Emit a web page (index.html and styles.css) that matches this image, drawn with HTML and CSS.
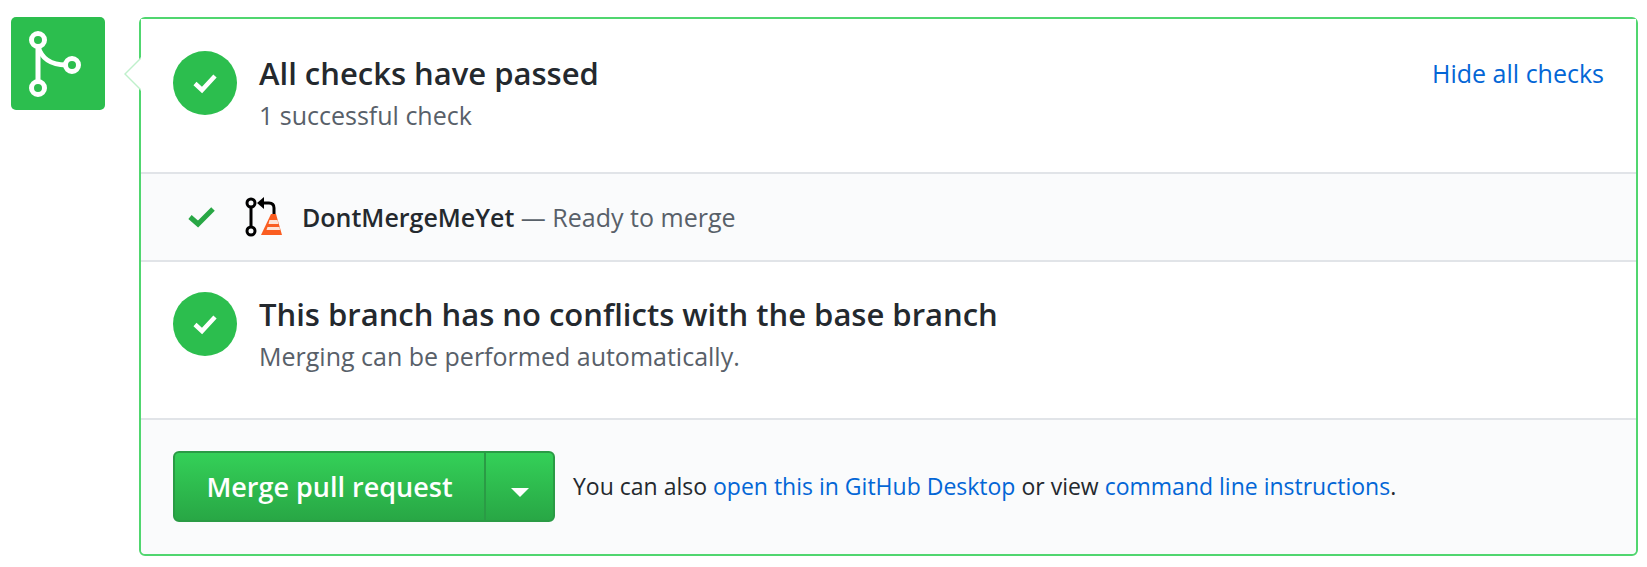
FILE: index.html
```html
<!DOCTYPE html>
<html lang="en">
<head>
    <meta charset="UTF-8">
    <title>Merge pull request</title>
    <link rel="stylesheet" href="styles.css">
</head>
<body>
    <div class="merge-box">
        <div class="merge-icon">
            <svg width="66" height="66" viewBox="0 0 66 66" fill="none" stroke="#fff" stroke-width="5">
                <circle cx="13" cy="9" r="6.5"/>
                <circle cx="13" cy="57" r="6.5"/>
                <circle cx="47" cy="34" r="6.5"/>
                <path d="M13 15V51"/>
                <path d="M13 15C16 27 26 34 41 34"/>
            </svg>
        </div>
        <div class="card">
            <div class="arrow"></div>

            <div class="section">
                <div class="status-circle">
                    <svg width="26" height="26" viewBox="0 0 26 26" fill="none" stroke="#fff" stroke-width="4.5"><path d="M3 13.5L10 20L23 6"/></svg>
                </div>
                <div class="section-text">
                    <h3>All checks have passed</h3>
                    <p>1 successful check</p>
                </div>
                <a class="link hide-link" href="#">Hide all checks</a>
            </div>

            <div class="check-row">
                <svg class="check-mark" width="28" height="22" viewBox="0 0 28 22" fill="none" stroke="#28a745" stroke-width="5"><path d="M2 11L10 18L25 3"/></svg>
                <svg class="app-icon" width="38" height="42" viewBox="0 0 38 42">
                    <g fill="none" stroke="#000" stroke-width="3">
                        <circle cx="6" cy="7" r="4"/>
                        <circle cx="6" cy="35" r="4"/>
                        <path d="M6 11V31"/>
                        <path d="M17 7H24Q29 7 29 12V20"/>
                    </g>
                    <path d="M12 7L19 1V13Z" fill="#000"/>
                    <path d="M26 18H31L37 39H16Z" fill="#fa5d21"/>
                    <path d="M24.5 24H32.5L33.5 28H23.5Z" fill="#fde3d6"/>
                    <path d="M22.5 31H34.5L35 34H21.5Z" fill="#fde3d6"/>
                </svg>
                <div class="check-text"><strong>DontMergeMeYet</strong> — Ready to merge</div>
            </div>

            <div class="section conflicts">
                <div class="status-circle">
                    <svg width="26" height="26" viewBox="0 0 26 26" fill="none" stroke="#fff" stroke-width="4.5"><path d="M3 13.5L10 20L23 6"/></svg>
                </div>
                <div class="section-text">
                    <h3>This branch has no conflicts with the base branch</h3>
                    <p>Merging can be performed automatically.</p>
                </div>
            </div>

            <div class="merge-footer">
                <div class="btn-group">
                    <button class="btn btn-main">Merge pull request</button>
                    <button class="btn btn-caret"><span class="caret"></span></button>
                </div>
                <p class="alt-text">You can also <a class="link" href="#">open this in GitHub Desktop</a> or view <a class="link" href="#">command line instructions</a>.</p>
            </div>
        </div>
    </div>
</body>
</html>
```

FILE: styles.css
```css
body {
    font-family: "Open Sans", "Noto Sans", sans-serif;
    background-color: white;
    color: #24292e;
    margin: 0;
    padding: 17px 9px 0 11px;
}

.merge-box {
    display: flex;
    align-items: flex-start;
    gap: 34px;
}

.merge-icon {
    flex: none;
    width: 94px;
    height: 93px;
    background: #2cbe4e;
    border-radius: 5px;
    display: flex;
    align-items: center;
    justify-content: center;
}

.card {
    position: relative;
    flex: 1;
    height: 539px;
    box-sizing: border-box;
    border: 2px solid #50d66f;
    border-radius: 6px;
    background: white;
}

.arrow {
    position: absolute;
    top: 38px;
    left: -17px;
    width: 0;
    height: 0;
    border-top: 17px solid transparent;
    border-bottom: 17px solid transparent;
    border-right: 17px solid #bff0cb;
}

.arrow::after {
    content: "";
    position: absolute;
    top: -15px;
    left: 2px;
    width: 0;
    height: 0;
    border-top: 15px solid transparent;
    border-bottom: 15px solid transparent;
    border-right: 15px solid white;
}

.section {
    position: relative;
    height: 153px;
    box-sizing: border-box;
    display: flex;
    align-items: flex-start;
    padding: 32px 32px 0 32px;
    background: white;
}

.status-circle {
    flex: none;
    width: 64px;
    height: 64px;
    border-radius: 50%;
    background: #2cbe4e;
    display: flex;
    align-items: center;
    justify-content: center;
}

.section-text {
    margin-left: 22px;
    flex: 1;
}

h3 {
    font-size: 31px;
    font-weight: 600;
    line-height: 44px;
    margin: 0;
    color: #24292e;
}

p {
    margin: 0;
}

.section-text p {
    font-size: 25px;
    line-height: 40px;
    color: #586069;
}

.link {
    color: #0366d6;
    text-decoration: none;
}

.hide-link {
    font-size: 25px;
    line-height: 40px;
    margin-top: 2px;
}

.check-row {
    height: 90px;
    box-sizing: border-box;
    display: flex;
    align-items: center;
    padding-left: 47px;
    background: #fafbfc;
    border-top: 2px solid #e1e4e8;
    border-bottom: 2px solid #e1e4e8;
}

.app-icon {
    margin-left: 29px;
}

.check-text {
    margin-left: 19px;
    font-size: 25px;
    color: #586069;
}

.check-text strong {
    font-weight: 600;
    color: #24292e;
}

.conflicts {
    height: 156px;
    padding-top: 30px;
}

.merge-footer {
    height: 136px;
    box-sizing: border-box;
    display: flex;
    align-items: flex-start;
    padding: 31px 32px 0 32px;
    background: #fafbfc;
    border-top: 2px solid #e1e4e8;
    border-radius: 0 0 5px 5px;
}

.btn-group {
    display: flex;
    flex: none;
}

.btn {
    height: 71px;
    color: white;
    font-family: inherit;
    font-size: 27px;
    font-weight: 600;
    background: linear-gradient(#34d058, #28a745);
    border: 2px solid #2a9b45;
    cursor: pointer;
}

.btn-main {
    width: 313px;
    border-radius: 6px 0 0 6px;
    padding: 0;
}

.btn-caret {
    width: 71px;
    margin-left: -2px;
    border-radius: 0 6px 6px 0;
    padding: 0;
}

.caret {
    display: inline-block;
    width: 0;
    height: 0;
    border-top: 9px solid white;
    border-left: 9px solid transparent;
    border-right: 9px solid transparent;
}

.alt-text {
    margin-left: 18px;
    font-size: 23px;
    line-height: 71px;
    color: #24292e;
}
```
